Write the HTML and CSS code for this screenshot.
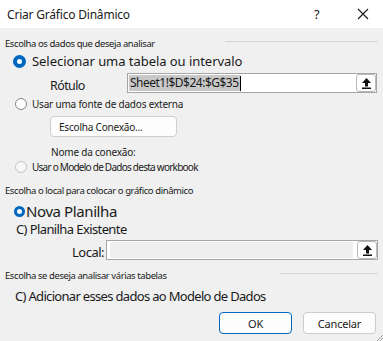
FILE: index.html
```html
<!DOCTYPE html>
<html lang="pt">
<head>
<meta charset="utf-8">
<link rel="stylesheet" href="styles.css">
</head>
<body>
<div class="dialog">
  <div class="titlebar">
    <span class="title">Criar Gráfico Dinâmico</span>
    <span class="help">?</span>
    <svg class="close" width="12" height="12" viewBox="0 0 12 12"><path d="M1 1L11 11M11 1L1 11" stroke="#1a1a1a" stroke-width="1.1"/></svg>
  </div>
  <div class="body">
    <div class="group-head g1">
      <span class="group-label">Escolha os dados que deseja analisar</span>
      <span class="rule r1"></span>
    </div>
    <div class="row row-sel">
      <span class="radio checked"></span>
      <span class="big-text t-sel">Selecionar uma tabela ou intervalo</span>
    </div>
    <div class="row row-ref">
      <span class="big-text label-rot">Rótulo</span>
      <div class="ref-input">
        <span class="ref-text"><span class="sel">Sheet1!$D$24:$G$35</span><span class="caret"></span></span>
        <span class="collapse"><svg width="11" height="12" viewBox="0 0 11 12"><path d="M5.5 1L10 6H7V9.5H4V6H1Z" fill="#111"/><rect x="1" y="10.5" width="9" height="1.5" fill="#111"/></svg></span>
      </div>
    </div>
    <div class="row row-ext">
      <span class="radio"></span>
      <span class="small-text">Usar uma fonte de dados externa</span>
    </div>
    <div class="row row-btn">
      <span class="btn conn">Escolha Conexão...</span>
    </div>
    <div class="row row-name">
      <span class="small-text">Nome da conexão:</span>
    </div>
    <div class="row row-model">
      <span class="radio disabled"></span>
      <span class="small-text t-model">Usar o Modelo de Dados desta workbook</span>
    </div>

    <div class="group-head g2">
      <span class="group-label">Escolha o local para colocar o gráfico dinâmico</span>
    </div>
    <div class="row row-nova">
      <span class="radio-sm"></span>
      <span class="nova-text">Nova Planilha</span>
    </div>
    <div class="row row-exist">
      <span class="big-text t-exist">C) Planilha Existente</span>
    </div>
    <div class="row row-local">
      <span class="big-text label-local">Local:</span>
      <div class="ref-input local">
        <span class="ref-fill"></span>
        <span class="collapse"><svg width="11" height="12" viewBox="0 0 11 12"><path d="M5.5 1L10 6H7V9.5H4V6H1Z" fill="#111"/><rect x="1" y="10.5" width="9" height="1.5" fill="#111"/></svg></span>
      </div>
    </div>

    <div class="group-head g3">
      <span class="group-label">Escolha se deseja analisar várias tabelas</span>
      <span class="rule r3"></span>
    </div>
    <div class="row row-add">
      <span class="big-text t-add">C) Adicionar esses dados ao Modelo de Dados</span>
    </div>
    <div class="actions">
      <span class="btn ok">OK</span>
      <span class="btn cancel">Cancelar</span>
    </div>
  </div>
  <svg class="grip" width="8" height="8" viewBox="0 0 8 8"><path d="M8 2L2 8M8 5L5 8" stroke="#a0a0a0" stroke-width="1"/></svg>
</div>
</body>
</html>
```

FILE: styles.css
```css
* { box-sizing: border-box; }
html, body { margin: 0; padding: 0; }
body {
  width: 383px;
  height: 341px;
  overflow: hidden;
  background: #f0f0f0;
  font-family: "Noto Sans", "Open Sans", sans-serif;
  color: #1a1a1a;
}
.dialog {
  position: relative;
  width: 383px;
  height: 341px;
  background: #f0f0f0;
}
.titlebar {
  height: 28px;
  background: #ffffff;
  display: flex;
  align-items: center;
  padding-left: 7px;
}
.title {
  font-size: 12px;
  flex: 1;
  letter-spacing: -0.2px;
}
.help {
  font-size: 13px;
  width: 12px;
  margin-right: 31px;
}
.close { margin-right: 14px; }

.group-head {
  display: flex;
  align-items: center;
  padding-left: 5px;
  height: 12px;
}
.g1 { margin-top: 9px; }
.g2 { margin-top: 10px; }
.g3 { margin-top: 9px; }
.group-label {
  font-size: 9.5px;
  letter-spacing: -0.42px;
  white-space: nowrap;
}
.rule {
  height: 1px;
  background: #d6d6d6;
  margin-left: auto;
  margin-right: 5px;
}
.r1 { width: 153px; margin-top: -4px; }
.r3 { width: 98px; margin-top: -3px; }

.row {
  display: flex;
  align-items: center;
}
.big-text {
  font-size: 13px;
  letter-spacing: -0.35px;
  white-space: nowrap;
}
.t-sel { letter-spacing: -0.05px; }
.t-exist { letter-spacing: -0.6px; }
.t-add { letter-spacing: -0.68px; }
.small-text {
  font-size: 10px;
  letter-spacing: -0.2px;
  white-space: nowrap;
}
.t-model { letter-spacing: -0.75px; }

.radio {
  width: 13px;
  height: 13px;
  border-radius: 50%;
  border: 1px solid #858585;
  background: #fff;
  flex: none;
}
.radio.checked {
  border: 4px solid #0067c0;
  background: #fff;
}
.radio.disabled {
  border-color: #c4c4c4;
  background: #f7f7f7;
}

.row-sel { height: 18px; margin-top: 3px; padding-left: 13px; }
.row-sel .radio { margin-right: 6px; }

.row-ref { height: 20px; margin-top: 3px; }
.label-rot {
  margin-left: 50px;
  width: 77px;
  font-size: 12.5px;
  letter-spacing: -0.6px;
  padding-top: 5px;
}
.ref-input {
  width: 250px;
  height: 20px;
  border: 1px solid #a5a5a5;
  background: #fff;
  display: flex;
  align-items: center;
}
.ref-text {
  flex: 1;
  display: flex;
  align-items: center;
  padding-left: 1px;
}
.sel {
  background: #c8c8c8;
  font-size: 12px;
  letter-spacing: -0.5px;
  line-height: 16px;
  padding: 0 1px;
}
.caret {
  width: 1px;
  height: 15px;
  background: #000;
}
.collapse {
  width: 20px;
  height: 18px;
  border: 1px solid #b9b9b9;
  border-radius: 3px;
  background: #fff;
  display: flex;
  align-items: center;
  justify-content: center;
}

.row-ext { height: 14px; margin-top: 4px; padding-left: 15px; }
.row-ext .radio, .row-model .radio { width: 12px; height: 12px; margin-right: 5px; }

.row-btn { height: 21px; margin-top: 5px; padding-left: 50px; }
.btn {
  display: flex;
  align-items: center;
  justify-content: center;
  background: #fdfdfd;
  border: 1px solid #cfcfcf;
  border-radius: 4px;
  font-size: 10px;
  letter-spacing: -0.2px;
}
.conn {
  width: 127px;
  height: 21px;
  justify-content: flex-start;
  padding-left: 8px;
}
.row-name { height: 14px; margin-top: 8px; padding-left: 51px; }
.row-model { height: 14px; margin-top: 1px; padding-left: 15px; }

.row-nova { height: 18px; margin-top: 6px; padding-left: 14px; }
.radio-sm {
  width: 11px;
  height: 11px;
  border-radius: 50%;
  border: 3px solid #0067c0;
  background: #fff;
  margin-right: 1px;
}
.nova-text {
  font-size: 15px;
  letter-spacing: -0.4px;
}
.row-exist { height: 18px; padding-left: 16px; }
.row-local { height: 20px; margin-top: 2px; }
.label-local { margin-left: 72px; width: 34px; letter-spacing: -0.5px; padding-top: 4px; }
.ref-input.local { width: 272px; }
.ref-fill {
  flex: 1;
  height: 16px;
  margin-left: 3px;
  margin-right: 4px;
  background: #efefef;
}

.row-add { height: 18px; margin-top: 6px; padding-left: 15px; }

.actions {
  display: flex;
  justify-content: flex-end;
  gap: 11px;
  margin-top: 7px;
  padding-right: 7px;
}
.ok, .cancel {
  width: 73px;
  height: 22px;
  font-size: 11px;
}
.ok { border-color: #0067c0; }
.cancel { border-color: #cccccc; }

.grip {
  position: absolute;
  right: 0;
  bottom: 0;
}
```
